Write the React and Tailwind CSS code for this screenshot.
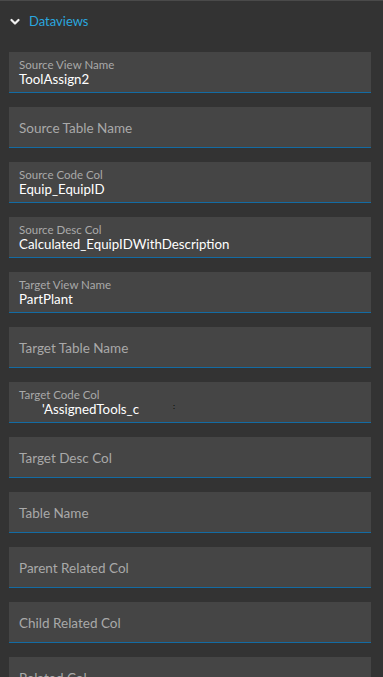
import React from "react";

const fields = [
  { label: "Source View Name", value: "ToolAssign2" },
  { label: "Source Table Name" },
  { label: "Source Code Col", value: "Equip_EquipID" },
  { label: "Source Desc Col", value: "Calculated_EquipIDWithDescription" },
  { label: "Target View Name", value: "PartPlant" },
  { label: "Target Table Name" },
  { label: "Target Code Col", value: "'AssignedTools_c", odd: true },
  { label: "Target Desc Col" },
  { label: "Table Name" },
  { label: "Parent Related Col" },
  { label: "Child Related Col" },
  { label: "Related Col" },
];

function Field({ label, value, odd }) {
  return (
    <div className="h-[41px] shrink-0 bg-[#454545] border-b border-[#136ba3] px-[10px] pt-[2px] flex flex-col justify-center">
      {value ? (
        <>
          <div className="text-[11.5px] leading-[13px] text-[#a9a9a9]">{label}</div>
          <div className="relative text-[13.3px] leading-[17px] text-white">
            {odd ? (
              <>
                <span className="pl-[23px]">{value}</span>
                <span className="absolute left-[154px] top-[-3px] text-[8px] text-black">:</span>
              </>
            ) : (
              value
            )}
          </div>
        </>
      ) : (
        <div className="text-[13.5px] leading-[17px] text-[#a9a9a9]">{label}</div>
      )}
    </div>
  );
}

export default function App() {
  return (
    <div
      className="w-[383px] h-[677px] overflow-hidden bg-[#333333] border-t border-[#4a4a4a]"
      style={{ fontFamily: "Lato, 'Noto Sans', sans-serif" }}
    >
      <div className="flex items-center h-[40px] pl-[10px] pt-[1px]">
        <svg width="10" height="8" viewBox="0 0 10 8">
          <path d="M1.5 2 L5 5.5 L8.5 2" stroke="#f0f0f0" strokeWidth="2.2" fill="none" strokeLinecap="round" strokeLinejoin="round" />
        </svg>
        <span className="ml-[9px] text-[13px] text-[#2aa7df]">Dataviews</span>
      </div>
      <div className="flex flex-col gap-[14px] pl-[9px] pr-[12px] pt-[11px]">
        {fields.map((f) => (
          <Field key={f.label} {...f} />
        ))}
      </div>
    </div>
  );
}
